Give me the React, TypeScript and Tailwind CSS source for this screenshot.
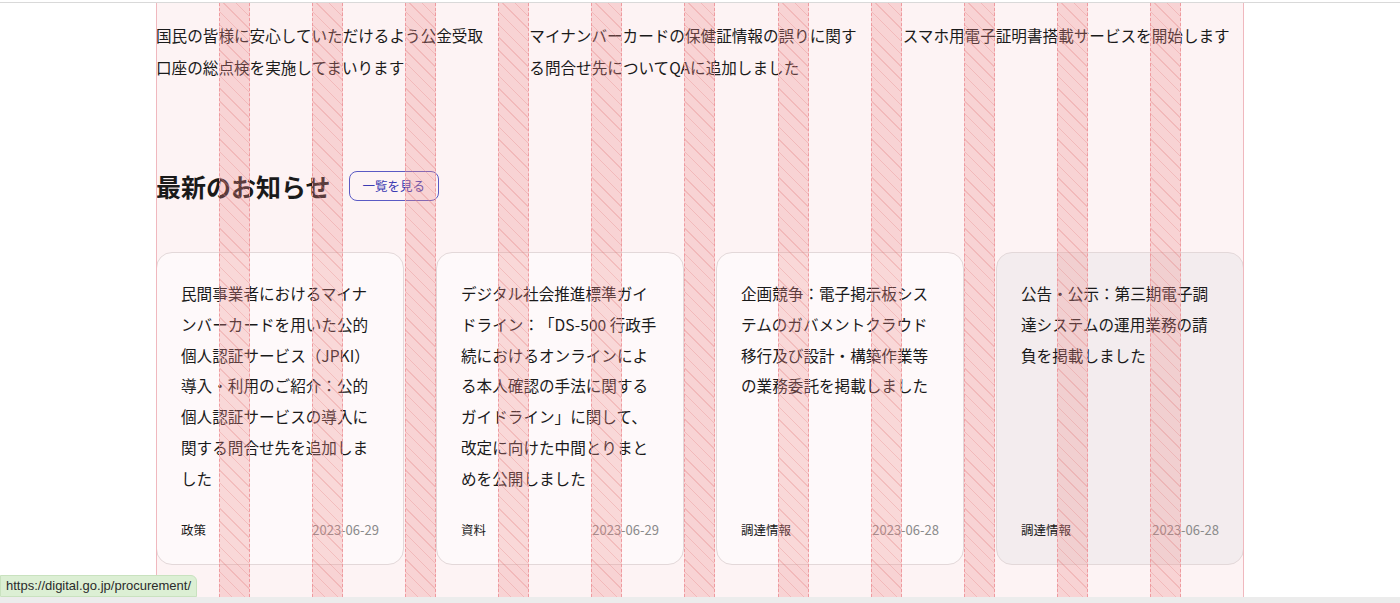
import React from 'react'

const topLinks = [
  '国民の皆様に安心していただけるよう公金受取口座の総点検を実施してまいります',
  'マイナンバーカードの保健証情報の誤りに関する問合せ先についてQAに追加しました',
  'スマホ用電子証明書搭載サービスを開始します',
]

const news = [
  {
    title: '民間事業者におけるマイナンバーカードを用いた公的個人認証サービス（JPKI）導入・利用のご紹介：公的個人認証サービスの導入に関する問合せ先を追加しました',
    category: '政策',
    date: '2023-06-29',
  },
  {
    title: 'デジタル社会推進標準ガイドライン：「DS-500 行政手続におけるオンラインによる本人確認の手法に関するガイドライン」に関して、改定に向けた中間とりまとめを公開しました',
    category: '資料',
    date: '2023-06-29',
  },
  {
    title: '企画競争：電子掲示板システムのガバメントクラウド移行及び設計・構築作業等の業務委託を掲載しました',
    category: '調達情報',
    date: '2023-06-28',
  },
  {
    title: '公告・公示：第三期電子調達システムの運用業務の請負を掲載しました',
    category: '調達情報',
    date: '2023-06-28',
    hovered: true,
  },
]

// 12-column debug grid laid over the page: columns clear, gutters hatched
function GridOverlay() {
  const tracks = Array.from({ length: 23 }, (_, i) => i)
  return (
    <div className="pointer-events-none absolute inset-0 grid grid-cols-[repeat(11,minmax(0,1fr)_31px)_minmax(0,1fr)] border-x border-[#f0b8be]">
      {tracks.map((i) =>
        i % 2 === 1 ? (
          <div
            key={i}
            className="border-x border-dashed border-[#ef9a9f] bg-[#f08c8c]/30 bg-[repeating-linear-gradient(45deg,transparent_0_8px,rgba(225,120,120,0.28)_8px_9px)]"
          />
        ) : (
          <div key={i} />
        )
      )}
    </div>
  )
}

function NewsCard({ item }: { item: (typeof news)[number] }) {
  return (
    <a
      href="#"
      className={`flex h-[313px] flex-col rounded-2xl border border-[#e3d8d9] px-6 pt-[25px] pb-[24px] ${
        item.hovered ? 'bg-[#f3ecee]' : 'bg-white/50'
      }`}
    >
      <p className="text-[15.6px] leading-[30.8px] text-[#1a1a1a] [text-spacing-trim:space-all]">{item.title}</p>
      <div className="mt-auto flex items-center justify-between leading-[20px]">
        <span className="text-[12.5px] text-[#1a1a1a]">{item.category}</span>
        <span className="text-[13px] text-[#8a8a8a]">{item.date}</span>
      </div>
    </a>
  )
}

export default function App() {
  return (
    <div className="relative flex h-[603px] flex-col overflow-hidden bg-white font-['Noto_Sans_CJK_JP','Noto_Sans',sans-serif]">
      <div className="h-[3px] border-b border-[#d9d9d9]" />

      <main className="relative mx-auto w-[1088px] flex-1 bg-[#fdf3f4]">
        <ul className="grid grid-cols-3 gap-x-[32px] pt-[16px]">
          {topLinks.map((t) => (
            <li key={t} className="text-[15.6px] leading-[32px] text-[#1a1a1a]">
              {t}
            </li>
          ))}
        </ul>

        <div className="mt-[85px] flex items-center gap-[18px]">
          <h2 className="text-[25px] font-bold leading-[36px] text-[#1a1a1a]">最新のお知らせ</h2>
          <button className="h-[30px] rounded-lg border border-[#5a5ac4] px-[13px] text-[12.5px] text-[#3b3bb3]">
            一覧を見る
          </button>
        </div>

        <div className="mt-[48px] grid grid-cols-4 gap-x-[32px]">
          {news.map((n) => (
            <NewsCard key={n.title} item={n} />
          ))}
        </div>

        <GridOverlay />
      </main>

      <div className="h-[6px] bg-[#ececec]" />

      <div className="absolute bottom-[6px] left-0 rounded-tr-md border border-[#c9e2bf] bg-[#dcefd4] px-[5px] py-[1px] font-['Liberation_Sans',sans-serif] text-[13px] leading-[18px] text-[#2b2b2b]">
        https://digital.go.jp/procurement/
      </div>
    </div>
  )
}
